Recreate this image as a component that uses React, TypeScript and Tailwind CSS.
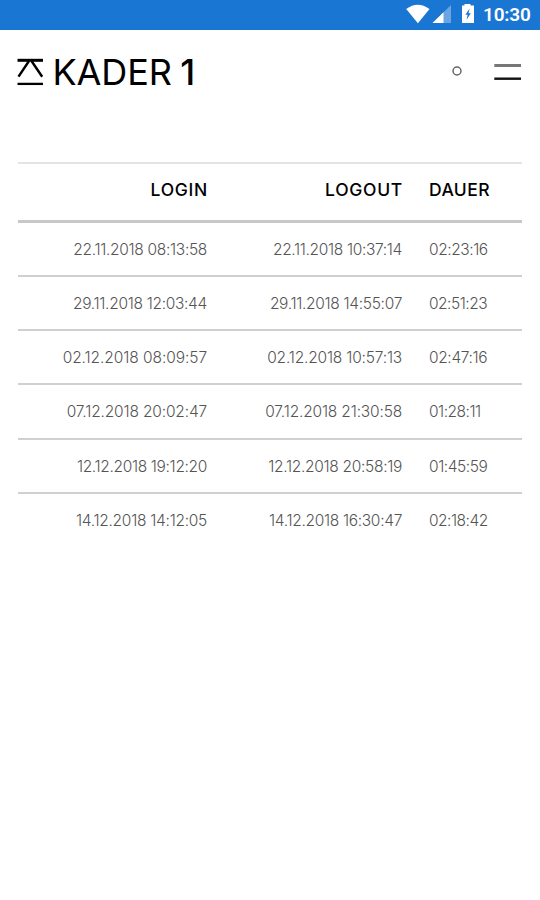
type Cell = { text: string; tracking: number };

const cell = (text: string, tracking: number): Cell => ({ text, tracking });

const sessions: [Cell, Cell, Cell][] = [
  [cell("22.11.2018 08:13:58", -0.31), cell("22.11.2018 10:37:14", -0.34), cell("02:23:16", -0.43)],
  [cell("29.11.2018 12:03:44", -0.31), cell("29.11.2018 14:55:07", -0.31), cell("02:51:23", -0.5)],
  [cell("02.12.2018 08:09:57", -0.07), cell("02.12.2018 10:57:13", -0.19), cell("02:47:16", -0.36)],
  [cell("07.12.2018 20:02:47", -0.16), cell("07.12.2018 21:30:58", -0.17), cell("01:28:11", -0.5)],
  [cell("12.12.2018 19:12:20", -0.34), cell("12.12.2018 20:58:19", -0.31), cell("01:45:59", -0.43)],
  [cell("14.12.2018 14:12:05", -0.28), cell("14.12.2018 16:30:47", -0.31), cell("02:18:42", -0.5)],
];

function StatusBar() {
  return (
    <div className="flex h-[30px] items-center justify-end bg-[#1976d2] pr-[10px] text-white">
      <svg width="72" height="30" viewBox="0 0 72 30" className="mr-[6px]">
        <path d="M1.2 9 Q12.7 0.5 24.5 9 L12.9 23.3 Z" fill="#fff" />
        <path d="M27.5 23 L46 5 V23 Z" fill="#fff" fillOpacity="0.35" />
        <path d="M27.5 23 L38.5 12.2 V23 Z" fill="#fff" />
        <path d="M59.5 5.5 V4 H65.5 V5.5 H69 V23 H57 V5.5 Z" fill="#fff" />
        <path d="M64.6 8.4 L60.4 14.8 H62.6 L61.6 19.8 L65.8 13.2 H63.5 Z" fill="#1976d2" />
      </svg>
      <span className="w-[47px] whitespace-nowrap font-['Roboto',sans-serif] text-[19px] font-semibold leading-[30px] tracking-[-0.2px]">
        10:30
      </span>
    </div>
  );
}

function Header() {
  return (
    <header className="flex h-[84px] items-center justify-between pl-[17px] pr-[19px]">
      <div className="flex items-center">
        <svg width="28" height="30" viewBox="0 0 28 30" fill="none" stroke="#000">
          <path d="M0.5 3.3 H26" strokeWidth="3" />
          <path d="M12 4 L1.5 19.7 M14.5 4 L25.2 19.7" strokeWidth="2.4" />
          <path d="M0.5 26.9 H26" strokeWidth="2.3" />
        </svg>
        <h1 className="ml-[7.5px] whitespace-nowrap text-[36px] font-[370] leading-[36px] tracking-[-0.1px] text-black">
          KADER<span className="ml-[8.5px] font-medium">1</span>
        </h1>
      </div>
      <svg width="72" height="30" viewBox="0 0 72 30" fill="none">
        <circle cx="8" cy="14" r="4" stroke="#666" strokeWidth="1.5" />
        <path d="M45.3 8.5 H72" stroke="#777" strokeWidth="3" />
        <path d="M45.3 21.7 H72" stroke="#111" strokeWidth="2.4" />
      </svg>
    </header>
  );
}

export default function App() {
  return (
    <div className="h-[900px] w-[540px] overflow-hidden bg-white font-['Inter',sans-serif]">
      <StatusBar />
      <Header />
      <main className="px-[18px] pt-[47.5px]">
        <div className="grid h-[61px] grid-cols-[189px_195px_93px] items-center border-t-2 border-b-3 border-t-[#e4e4e4] border-b-[#c8c8c8] pb-[2px] text-[17.5px] font-medium text-black">
          <span className="-mr-px text-right tracking-[0.7px]">LOGIN</span>
          <span className="-mr-px text-right tracking-[0.7px]">LOGOUT</span>
          <span className="pl-[27px] tracking-[0.4px]">DAUER</span>
        </div>
        {sessions.map(([login, logout, duration]) => (
          <div
            key={login.text}
            className="grid h-[54.25px] grid-cols-[189px_195px_93px] items-center whitespace-nowrap border-b-2 border-[#d0d0d0] pt-px text-[15.5px] font-light text-[#555] last:border-transparent"
          >
            <span className="text-right" style={{ letterSpacing: login.tracking }}>{login.text}</span>
            <span className="text-right" style={{ letterSpacing: logout.tracking }}>{logout.text}</span>
            <span className="pl-[27px]" style={{ letterSpacing: duration.tracking }}>{duration.text}</span>
          </div>
        ))}
      </main>
    </div>
  );
}
